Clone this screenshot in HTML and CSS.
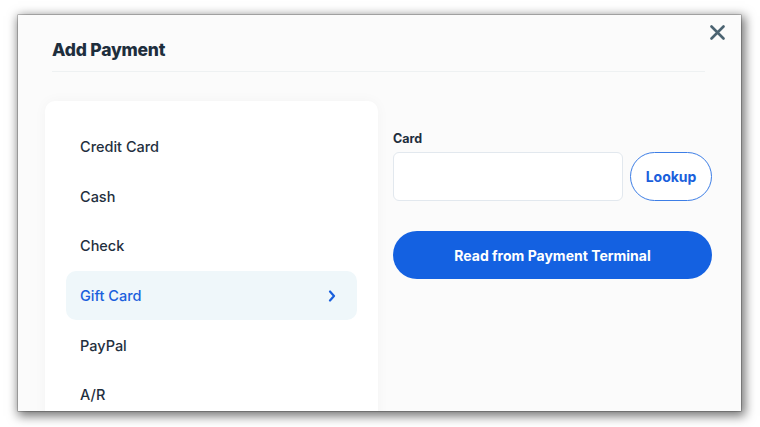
FILE: index.html
```html
<!DOCTYPE html>
<html lang="en">
<head>
<meta charset="utf-8">
<title>Add Payment</title>
<link rel="stylesheet" href="styles.css">
</head>
<body>
<div class="modal">
  <button class="close" aria-label="Close">
    <svg width="15" height="15" viewBox="0 0 15 15"><path d="M1.5 1.5 L13.5 13.5 M13.5 1.5 L1.5 13.5" stroke="#4b6371" stroke-width="2.6" stroke-linecap="round"/></svg>
  </button>
  <header class="modal-header">
    <h1 class="title">Add Payment</h1>
  </header>
  <div class="modal-body">
    <ul class="methods">
      <li class="method">Credit Card</li>
      <li class="method">Cash</li>
      <li class="method">Check</li>
      <li class="method active">Gift Card
        <svg class="chev" width="8" height="12" viewBox="0 0 8 12"><path d="M2 1.5 L6 6 L2 10.5" fill="none" stroke="#1a60dd" stroke-width="2.2" stroke-linecap="round" stroke-linejoin="round"/></svg>
      </li>
      <li class="method">PayPal</li>
      <li class="method">A/R</li>
    </ul>
    <section class="detail">
      <label class="label" for="card">Card</label>
      <div class="row">
        <input id="card" class="input" type="text">
        <button class="btn-outline">Lookup</button>
      </div>
      <button class="btn-primary">Read from Payment Terminal</button>
    </section>
  </div>
</div>
</body>
</html>
```
FILE: styles.css
```css
* { box-sizing: border-box; }
html, body { margin: 0; padding: 0; background: #ffffff; }
body {
  font-family: Inter, "Noto Sans", sans-serif;
  color: #1e2e3d;
  padding: 15px 0 0 18px;
  height: 427px;
  overflow: hidden;
}
.modal {
  position: relative;
  width: 723px;
  height: 396px;
  background: #fbfbfb;
  overflow: hidden;
  box-shadow: 0 0 0 0.5px rgba(0,0,0,0.4), 2px 3px 10px 2px rgba(0,0,0,0.55);
}
.close {
  position: absolute;
  top: 10px;
  right: 16px;
  padding: 0;
  border: 0;
  background: none;
  width: 15px;
  height: 15px;
  display: flex;
}
.modal-header {
  margin: 0 36px 0 34px;
  border-bottom: 1px solid #eef1f2;
  height: 57px;
  display: flex;
  align-items: flex-end;
  padding-bottom: 13px;
}
.title {
  margin: 0;
  font-size: 17.5px;
  font-weight: 800;
  color: #1e2e3d;
  letter-spacing: -0.2px;
  line-height: 1;
}
.modal-body {
  display: flex;
  gap: 15px;
  padding: 29px 29px 0 27px;
}
.methods {
  list-style: none;
  margin: 0;
  padding: 21px;
  width: 333px;
  height: 340px;
  flex: none;
  background: #ffffff;
  border-radius: 10px;
  box-shadow: 0 0 14px rgba(0,0,0,0.035);
}
.method {
  height: 49.6px;
  display: flex;
  align-items: center;
  justify-content: space-between;
  padding: 0 21px 0 14px;
  font-size: 14.5px;
  font-weight: 500;
  color: #1f2f3e;
  border-radius: 10px;
}
.method.active {
  background: #eff7fa;
  color: #1a60dd;
}
.chev { display: block; }
.detail {
  flex: 1;
  display: flex;
  flex-direction: column;
  padding-top: 31px;
}
.label {
  font-size: 12.5px;
  font-weight: 700;
  color: #1e2e3d;
  line-height: 14px;
  margin-bottom: 6px;
}
.row {
  display: flex;
  gap: 7px;
}
.input {
  width: 230px;
  height: 49px;
  border: 1px solid #e2e8ee;
  border-radius: 6px;
  background: #ffffff;
  outline: none;
}
.btn-outline {
  flex: 1;
  height: 49px;
  border: 1px solid #3d7ee6;
  border-radius: 25px;
  background: #ffffff;
  color: #1a5fdc;
  font-family: inherit;
  font-size: 14px;
  font-weight: 700;
}
.btn-primary {
  margin-top: 30px;
  height: 48px;
  border: 0;
  border-radius: 24px;
  background: #1461e1;
  color: #ffffff;
  font-family: inherit;
  font-size: 14px;
  font-weight: 700;
}
```
